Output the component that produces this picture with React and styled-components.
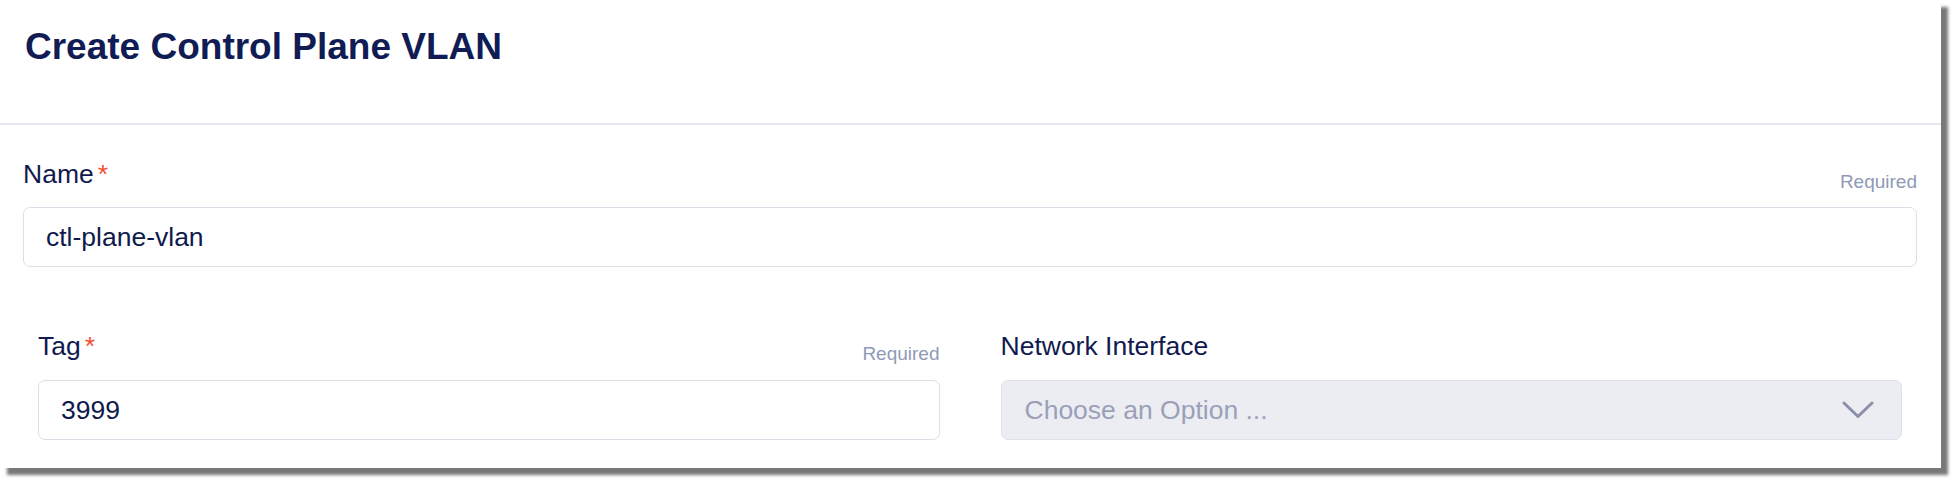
import React from "react";
import styled, { createGlobalStyle } from "styled-components";

const Global = createGlobalStyle`
  html, body { margin: 0; padding: 0; background: #ffffff; }
  body { font-family: "Liberation Sans", Arial, sans-serif; }
  * { box-sizing: border-box; }
`;

const Page = styled.div`
  padding: 0 0 15px 0;
`;

const Card = styled.div`
  width: 1941px;
  background: #ffffff;
  box-shadow: 7px 7px 3px rgba(30, 30, 30, 0.6);
`;

const Header = styled.header`
  height: 125px;
  padding: 27px 25px 0;
  border-bottom: 2px solid #e4e7f0;
`;

const Title = styled.h1`
  margin: 0;
  font-size: 37px;
  line-height: 40px;
  font-weight: 700;
  color: #111c55;
`;

const Body = styled.div`
  padding: 34px 24px 28px 23px;
  display: flex;
  flex-direction: column;
  gap: 64px;
`;

const Row = styled.div`
  display: grid;
  grid-template-columns: ${(p) => (p.$cols === 2 ? "1fr 1fr" : "1fr")};
  column-gap: 61px;
  padding: ${(p) => (p.$inset ? "0 15px 0 15px" : "0")};
`;

const Field = styled.div`
  display: flex;
  flex-direction: column;
  gap: ${(p) => p.$gap || 18}px;
`;

const LabelRow = styled.div`
  display: flex;
  justify-content: space-between;
  align-items: flex-end;
  height: 30px;
`;

const Label = styled.label`
  font-size: 26.5px;
  line-height: 30px;
  color: #111a4f;
`;

const Star = styled.span`
  color: #f04e30;
  margin-left: 4px;
`;

const Hint = styled.span`
  font-size: 19px;
  line-height: 20px;
  color: #8f99b6;
  margin-bottom: -3px;
`;

const Input = styled.div`
  height: 60px;
  display: flex;
  align-items: center;
  padding: 0 22px;
  border: 1px solid #dcdfe8;
  border-radius: 7px;
  font-size: 26.5px;
  color: #0f1a4c;
  background: #ffffff;
`;

const Select = styled.div`
  height: 60px;
  display: flex;
  align-items: center;
  justify-content: space-between;
  padding: 0 27px 0 23px;
  border: 1px solid #dfe1e9;
  border-radius: 7px;
  font-size: 26.5px;
  color: #9aa0b9;
  background: #ebedf2;
`;

const Chevron = () => (
  <svg width="32" height="18" viewBox="0 0 32 18" fill="none">
    <polyline
      points="2,2 16,15.5 30,2"
      stroke="#8a90a9"
      strokeWidth="3"
      strokeLinecap="round"
      strokeLinejoin="round"
    />
  </svg>
);

export default function App() {
  return (
    <Page>
      <Global />
      <Card>
        <Header>
          <Title>Create Control Plane VLAN</Title>
        </Header>
        <Body>
          <Row>
            <Field>
              <LabelRow>
                <Label>
                  Name<Star>*</Star>
                </Label>
                <Hint>Required</Hint>
              </LabelRow>
              <Input>ctl-plane-vlan</Input>
            </Field>
          </Row>
          <Row $cols={2} $inset>
            <Field $gap={19}>
              <LabelRow>
                <Label>
                  Tag<Star>*</Star>
                </Label>
                <Hint>Required</Hint>
              </LabelRow>
              <Input>3999</Input>
            </Field>
            <Field $gap={19}>
              <LabelRow>
                <Label>Network Interface</Label>
              </LabelRow>
              <Select>
                <span>Choose an Option ...</span>
                <Chevron />
              </Select>
            </Field>
          </Row>
        </Body>
      </Card>
    </Page>
  );
}
